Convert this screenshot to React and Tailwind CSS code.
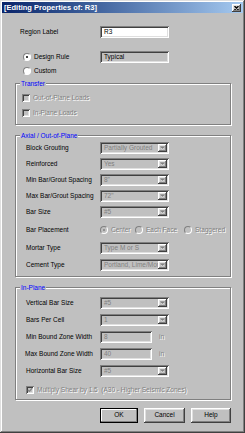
import React from "react";

const sunken =
  "shadow-[inset_1px_1px_#808080,inset_-1px_-1px_#ffffff,inset_2px_2px_#404040,inset_-2px_-2px_#dfdfdf]";
const raised =
  "shadow-[inset_-1px_-1px_#404040,inset_1px_1px_#ffffff,inset_-2px_-2px_#808080,inset_2px_2px_#dfdfdf]";
const dis = "text-[#808080] [text-shadow:1px_1px_0_#ffffff]";

function Arrow() {
  return (
    <div className={`w-[9px] h-full bg-[#c0c0c0] ${raised} flex items-center justify-center`}>
      <svg width="5" height="4" viewBox="0 0 5 4">
        <path d="M1 2 L4 2 L2.5 3.5 Z" fill="#ffffff" />
        <path d="M0 1 L5 1 L2.5 3.5 Z" fill="#808080" transform="translate(0,-0.5)" />
      </svg>
    </div>
  );
}

function Combo({ value }) {
  return (
    <div className={`w-[69px] h-[12px] bg-[#c0c0c0] ${sunken} flex items-stretch p-[2px]`}>
      <div className="flex-1 overflow-hidden whitespace-nowrap pl-[2px] flex items-center text-[#808080]">
        {value}
      </div>
      <Arrow />
    </div>
  );
}

function Radio({ checked, disabled }) {
  return (
    <div
      className={`w-[8px] h-[8px] rounded-full shrink-0 flex items-center justify-center border border-t-[#808080] border-l-[#808080] border-b-[#ffffff] border-r-[#ffffff] ${
        disabled ? "bg-[#c0c0c0]" : "bg-white"
      }`}
    >
      {checked && (
        <div className={`w-[2px] h-[2px] rounded-full ${disabled ? "bg-[#808080]" : "bg-black"}`} />
      )}
    </div>
  );
}

function Check({ checked }) {
  return (
    <div className={`w-[8px] h-[8px] shrink-0 bg-[#c0c0c0] ${sunken} flex items-center justify-center`}>
      {checked && (
        <svg width="6" height="6" viewBox="0 0 6 6">
          <path d="M0.8 2.8 L2.3 4.3 L5.2 1.2" stroke="#808080" strokeWidth="1.2" fill="none" />
        </svg>
      )}
    </div>
  );
}

function Group({ title, className, children }) {
  return (
    <div
      className={`relative ml-[13px] w-[216px] border border-[#808080] shadow-[inset_1px_1px_#ffffff,1px_1px_#ffffff] ${className}`}
    >
      <span className="absolute left-[4px] top-[-5px] bg-[#c0c0c0] px-[1px] leading-[9px] text-[#0000ff]">
        {title}
      </span>
      {children}
    </div>
  );
}

function Row({ label, children, className = "" }) {
  return (
    <div className={`flex items-center h-[12px] ${className}`}>
      <div className="w-[84px] pl-[10px] whitespace-nowrap">{label}</div>
      {children}
    </div>
  );
}

function Field({ value }) {
  return (
    <div className={`w-[52px] h-[12px] bg-[#c0c0c0] ${sunken} flex items-center pl-[4px] text-[#808080]`}>
      {value}
    </div>
  );
}

function Button({ label, w, def }) {
  return (
    <div
      className={`${w} h-[15px] bg-[#c0c0c0] flex items-center justify-center ${
        def
          ? "border border-black shadow-[inset_-1px_-1px_#808080,inset_1px_1px_#ffffff]"
          : raised
      }`}
    >
      {label}
    </div>
  );
}

export default function App() {
  return (
    <div
      className={`w-[245px] h-[433px] bg-[#c0c0c0] p-[2px] font-['Liberation_Sans',Arial,sans-serif] text-[6.5px] leading-none text-black shadow-[inset_-1px_-1px_#404040,inset_1px_1px_#dfdfdf,inset_-2px_-2px_#808080,inset_2px_2px_#ffffff] flex flex-col`}
    >
      <div className="h-[11px] bg-gradient-to-r from-[#0a246a] to-[#a6caf0] flex items-center justify-between pl-[2px] pr-[2px]">
        <span className="text-white font-bold text-[7.5px] whitespace-nowrap">[Editing Properties of: R3]</span>
        <div className={`w-[9px] h-[8px] bg-[#c0c0c0] ${raised} flex items-center justify-center`}>
          <svg width="5" height="4" viewBox="0 0 5 4">
            <path d="M0.5 0 L4.5 4 M4.5 0 L0.5 4" stroke="#000" strokeWidth="1.2" />
          </svg>
        </div>
      </div>

      <div className="mt-[13px] h-[12px] flex items-center">
        <div className="w-[98px] pl-[18px]">Region Label</div>
        <div className={`w-[69px] h-[12px] bg-white ${sunken} flex items-center pl-[4px]`}>R3</div>
      </div>

      <div className="mt-[13px] h-[12px] flex items-center">
        <div className="w-[98px] pl-[21px] flex items-center gap-[3px]">
          <Radio checked />
          <span>Design Rule</span>
        </div>
        <div className={`w-[69px] h-[12px] bg-[#c0c0c0] ${sunken} flex items-center pl-[4px]`}>Typical</div>
      </div>

      <div className="mt-[3px] h-[10px] flex items-center pl-[21px] gap-[3px]">
        <Radio />
        <span>Custom</span>
      </div>

      <Group title="Transfer" className="mt-[7px] pt-[9px] pb-[6px] flex flex-col gap-[5px]">
        <div className="h-[10px] flex items-center pl-[6px] gap-[3px]">
          <Check />
          <span className={dis}>Out-of-Plane Loads</span>
        </div>
        <div className="h-[10px] flex items-center pl-[6px] gap-[3px]">
          <Check />
          <span className={dis}>In-Plane Loads</span>
        </div>
      </Group>

      <Group title="Axial / Out-of-Plane" className="mt-[10px] pt-[6px] pb-[5px] flex flex-col">
        <div className="flex flex-col gap-[4px]">
          <Row label="Block Grouting"><Combo value="Partially Grouted" /></Row>
          <Row label="Reinforced"><Combo value="Yes" /></Row>
          <Row label="Min Bar/Grout Spacing"><Combo value="8&quot;" /></Row>
          <Row label="Max Bar/Grout Spacing"><Combo value="72&quot;" /></Row>
          <Row label="Bar Size"><Combo value="#5" /></Row>
        </div>
        <Row label="Bar Placement" className="mt-[6px]">
          <div className="flex items-center">
            <Radio checked disabled />
            <span className={`${dis} ml-[3px] w-[24px]`}>Center</span>
            <Radio disabled />
            <span className={`${dis} ml-[3px] w-[38px]`}>Each Face</span>
            <Radio disabled />
            <span className={`${dis} ml-[3px]`}>Staggered</span>
          </div>
        </Row>
        <Row label="Mortar Type" className="mt-[6px]"><Combo value="Type M or S" /></Row>
        <Row label="Cement Type" className="mt-[5px]"><Combo value="Portland, Lime/Mor" /></Row>
      </Group>

      <Group title="In-Plane" className="mt-[10px] pt-[9px] pb-[4px] flex flex-col">
        <div className="flex flex-col gap-[5px]">
          <Row label="Vertical Bar Size"><Combo value="#5" /></Row>
          <Row label="Bars Per Cell"><Combo value="1" /></Row>
          <Row label="Min Bound Zone Width">
            <Field value="8" />
            <span className={`${dis} ml-[7px]`}>in</span>
          </Row>
          <Row label={<span className="-ml-[1px]">Max Bound Zone Width</span>}>
            <Field value="40" />
            <span className={`${dis} ml-[7px]`}>in</span>
          </Row>
          <Row label="Horizontal Bar Size"><Combo value="#5" /></Row>
        </div>
        <div className="mt-[8px] h-[10px] flex items-center pl-[10px] gap-[3px]">
          <Check checked />
          <span className={`${dis} whitespace-nowrap`}>Multiply Shear by 1.5&nbsp;&nbsp;(A30 - Higher Seismic Zones)</span>
        </div>
      </Group>

      <div className="mt-[8px] flex justify-end pr-[12px] gap-[6px]">
        <Button label="OK" w="w-[38px]" def />
        <Button label="Cancel" w="w-[41px]" />
        <Button label="Help" w="w-[40px]" />
      </div>
    </div>
  );
}
